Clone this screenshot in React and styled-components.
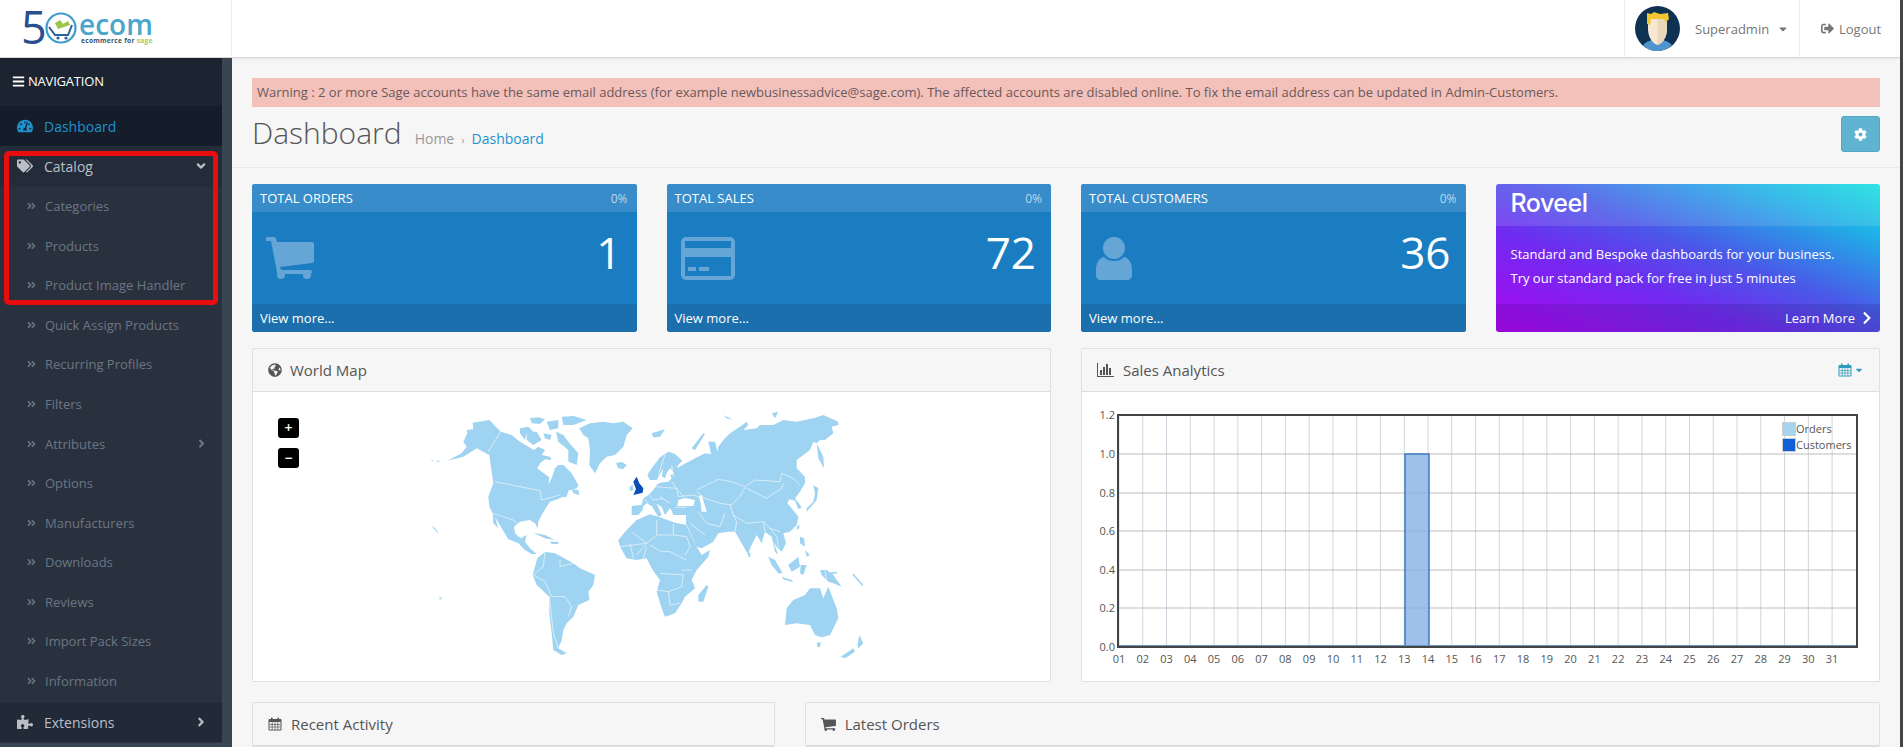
import React from "react";
import styled, { createGlobalStyle } from "styled-components";
import {
  FaAngleDoubleRight,
  FaAngleDown,
  FaAngleRight,
  FaBars,
  FaCaretDown,
  FaChevronRight,
  FaCog,
  FaGlobeAmericas,
  FaPuzzlePiece,
  FaSignOutAlt,
  FaTachometerAlt,
  FaTags,
} from "react-icons/fa";

const GlobalStyle = createGlobalStyle`
  html, body {
    margin: 0;
    height: 747px;
    overflow: hidden;
    background: #f6f6f6;
    font-family: "Open Sans", "Liberation Sans", sans-serif;
  }
  * { box-sizing: border-box; }
`;

const Page = styled.div`
  width: 1903px;
  height: 747px;
  overflow: hidden;
  border-right: 3px solid #454545;
  display: flex;
  flex-direction: column;
`;

/* header */
const Header = styled.header`
  flex: none;
  height: 58px;
  background: #fff;
  border-bottom: 1px solid #d8d8d8;
  box-shadow: 0 1px 2px rgba(0, 0, 0, 0.08);
  display: flex;
  position: relative;
  z-index: 2;
`;

const LogoCell = styled.div`
  width: 232px;
  border-right: 1px solid #eee;
  padding: 11px 0 0 20px;
`;

const LogoSvg = styled.svg`
  display: block;
  overflow: visible;
  font-family: "Open Sans", "Liberation Sans", sans-serif;
`;

const HeaderSpacer = styled.div`
  flex: 1;
`;

const UserCell = styled.div`
  width: 175px;
  border-left: 1px solid #eee;
  display: flex;
  align-items: center;
  padding-left: 10px;
  font-size: 13px;
  color: #777;
`;

const UserName = styled.span`
  margin-left: 15px;
`;

const CaretIcon = styled(FaCaretDown)`
  margin-left: 8px;
  font-size: 12px;
  color: #777;
`;

const LogoutCell = styled.div`
  width: 101px;
  border-left: 1px solid #eee;
  display: flex;
  align-items: center;
  gap: 5px;
  padding-left: 21px;
  font-size: 13px;
  color: #777;
`;

/* sidebar */
const Body = styled.div`
  flex: 1;
  display: flex;
  min-height: 0;
`;

const Aside = styled.aside`
  flex: none;
  width: 232px;
  background: #3a4552;
  overflow: hidden;
`;

const Nav = styled.nav`
  width: 222px;
  background: #29313f;
  position: relative;
`;

const NavTitle = styled.div`
  height: 48px;
  background: #1c2331;
  color: #fff;
  font-size: 13px;
  letter-spacing: -0.2px;
  display: flex;
  align-items: center;
  gap: 3px;
  padding: 0 0 2px 12px;
  svg { font-size: 13px; }
`;

const TopItem = styled.div`
  height: ${({ $h }) => $h || 40}px;
  margin-top: ${({ $gapTop }) => $gapTop || 0}px;
  background: ${({ $bg }) => $bg};
  color: ${({ $color }) => $color};
  font-size: 14px;
  display: flex;
  align-items: center;
  padding: 0 14px 0 17px;
  border-bottom: ${({ $line }) => ($line ? "1px solid #2e3644" : "none")};
`;

const TopIcon = styled.span`
  width: 27px;
  font-size: 16px;
  display: flex;
  align-items: center;
`;

const ItemText = styled.span`
  flex: 1;
`;

const SubItem = styled.div`
  height: 39.55px;
  color: #6c7683;
  font-size: 13px;
  display: flex;
  align-items: center;
  padding: 0 14px 0 27px;
`;

const SubIcon = styled(FaAngleDoubleRight)`
  width: 9px;
  height: 12px;
  margin-right: 9px;
  flex: none;
`;

const Highlight = styled.div`
  position: absolute;
  left: 4px;
  top: 93px;
  width: 214px;
  height: 154px;
  border: 5px solid #e80d0f;
  border-radius: 5px;
  pointer-events: none;
`;

/* page head */
const Main = styled.main`
  flex: 1;
  min-width: 0;
`;

const PageHead = styled.div`
  height: 110px;
  padding: 20px 20px 0;
  border-bottom: 1px solid #e9e9e9;
`;

const Alert = styled.div`
  height: 29px;
  background: #f3c0ba;
  color: #6a5a5a;
  font-size: 13px;
  line-height: 29px;
  padding-left: 5px;
`;

const TitleRow = styled.div`
  display: flex;
  align-items: flex-start;
  height: 61px;
`;

const Title = styled.h1`
  margin: 5px 0 0;
  font-size: 30px;
  line-height: 42px;
  font-weight: 300;
  color: #555;
`;

const Crumbs = styled.div`
  margin: 17px 0 0 13px;
  font-size: 14px;
  line-height: 30px;
  color: #999;
  flex: 1;
`;

const CrumbSep = styled.span`
  margin: 0 7px;
  font-size: 11px;
`;

const CrumbLink = styled.span`
  color: #1e91cf;
`;

const SettingsButton = styled.div`
  margin-top: 9px;
  width: 39px;
  height: 36px;
  background: #60b3d1;
  border: 1px solid #52a7c6;
  border-radius: 3px;
  color: #fff;
  font-size: 13px;
  display: flex;
  align-items: center;
  justify-content: center;
`;

const Content = styled.div`
  padding: 16px 20px 0;
`;

const TileGrid = styled.div`
  display: grid;
  grid-template-columns: repeat(4, 1fr);
  gap: 30px;
  margin-bottom: 16px;
`;

const Tile = styled.div`
  height: 148px;
  border-radius: 3px;
  overflow: hidden;
  color: #fff;
  display: flex;
  flex-direction: column;
  background: #1b7dc1;
`;

const TileHead = styled.div`
  height: 28px;
  padding: 0 7px 0 8px;
  background: #378cc9;
  font-size: 13px;
  display: flex;
  align-items: center;
  justify-content: space-between;
`;

const Percent = styled.span`
  color: #bcd8ec;
  font-size: 12px;
  padding-right: 2px;
`;

const TileBody = styled.div`
  flex: 1;
  display: flex;
  align-items: center;
  justify-content: space-between;
  padding: 0 15px 0 ${({ $pad }) => $pad}px;
`;

const TileNumber = styled.div`
  font-size: 44px;
  line-height: 1;
  margin-bottom: 12px;
`;

const TileFoot = styled.div`
  height: 28px;
  padding: 0 8px;
  background: #1c6fad;
  font-size: 13px;
  line-height: 28px;
`;

const RoveelTile = styled.div`
  height: 148px;
  border-radius: 3px;
  overflow: hidden;
  color: #fff;
  display: flex;
  flex-direction: column;
  background: linear-gradient(to top right, #ab07f2 0%, #6f2cf0 35%, #4a58e8 55%, #1fb0e6 82%, #12e0e0 100%);
`;

const RoveelHead = styled.div`
  height: 42px;
  background: rgba(255, 255, 255, 0.12);
  padding: 3px 0 0 15px;
  font-family: Inter, "Liberation Sans", sans-serif;
  font-size: 25px;
  font-weight: 500;
  letter-spacing: -0.5px;
  line-height: 32px;
`;

const RoveelBody = styled.div`
  flex: 1;
  padding: 16px 15px 0;
  font-size: 13px;
  line-height: 24px;
`;

const RoveelFoot = styled.div`
  height: 28px;
  background: rgba(0, 0, 0, 0.1);
  padding-right: 6px;
  font-size: 13px;
  display: flex;
  align-items: center;
  justify-content: flex-end;
  gap: 5px;
  svg { font-size: 14px; }
`;

/* panels */
const PanelGrid = styled.div`
  display: grid;
  grid-template-columns: ${({ $columns }) => $columns};
  gap: 30px;
  margin-bottom: 20px;
`;

const Panel = styled.section`
  background: #fff;
  border: 1px solid #e0e0e0;
  border-radius: 1px;
`;

const PanelHead = styled.div`
  height: 43px;
  background: #f6f6f6;
  border-bottom: 1px solid #ddd;
  color: #555;
  font-size: 15px;
  padding: 0 15px;
  display: flex;
  align-items: center;
  gap: ${({ $gap }) => $gap || 8}px;
`;

const HeadIcon = styled.span`
  display: flex;
  font-size: 14px;
  color: #555;
`;

const HeadRight = styled.span`
  margin-left: auto;
  display: flex;
  align-items: center;
  gap: 2px;
  color: #2f9bbd;
  font-size: 10px;
`;

const MapBody = styled.div`
  height: 289px;
  padding: 8px 0 0 177px;
  position: relative;
`;

const MapSvg = styled.svg`
  display: block;
  width: 450px;
  height: 265px;
`;

const ZoomButton = styled.div`
  position: absolute;
  left: 25px;
  top: ${({ $top }) => $top}px;
  width: 21px;
  height: 20px;
  background: #000;
  border-radius: 3px;
  color: #fff;
  font-size: 14px;
  font-weight: 600;
  line-height: 19px;
  text-align: center;
`;

const ChartSvg = styled.svg`
  display: block;
  width: 797px;
  height: 289px;
  font-family: "Open Sans", "Liberation Sans", sans-serif;
  font-size: 11px;
  fill: #555;
`;

/* drawn icons */
const CalendarGlyph = ({ size = 14, color = "#555", paper = "#f6f6f6" }) => (
  <svg width={size} height={size} viewBox="0 0 14 14" fill="none">
    <rect x="0.5" y="2" width="13" height="11.5" rx="1" fill={color} />
    <rect x="1.5" y="5" width="11" height="7.5" fill={paper} />
    <path d="M1.5 7.5h11M1.5 10h11M4.2 5v7.5M7 5v7.5M9.8 5v7.5" stroke={color} strokeWidth="0.7" />
    <rect x="3" y="0.5" width="1.6" height="3" rx="0.6" fill={color} />
    <rect x="9.4" y="0.5" width="1.6" height="3" rx="0.6" fill={color} />
  </svg>
);

const BarsGlyph = () => (
  <svg width="17" height="14" viewBox="0 0 17 14" fill="#555">
    <path d="M0 0h1v13h16v1H0z" />
    <rect x="3" y="7" width="2" height="5" />
    <rect x="6" y="4" width="2" height="8" />
    <rect x="9" y="1" width="2" height="11" />
    <rect x="12" y="5" width="2" height="7" />
  </svg>
);

const CartGlyph = ({ width = 48, height = 42, color = "#65a6d6" }) => (
  <svg width={width} height={height} viewBox="0 0 48 42" fill={color}>
    <path d="M0 0h8a2 2 0 0 1 2 2l1 3h35a2 2 0 0 1 2 2v17a2 2 0 0 1-2 2L14 30l1 3h29a1.5 1.5 0 0 1 0 4H13a2 2 0 0 1-2-2L5 4H0z" />
    <circle cx="15" cy="38" r="4" />
    <circle cx="41" cy="38" r="4" />
  </svg>
);

const CardGlyph = () => (
  <svg width="54" height="43" viewBox="0 0 54 43" fill="#65a6d6">
    <path
      fillRule="evenodd"
      d="M5 0h44a5 5 0 0 1 5 5v33a5 5 0 0 1-5 5H5a5 5 0 0 1-5-5V5a5 5 0 0 1 5-5zM4 4v7h46V4zM4 20v18a1 1 0 0 0 1 1h44a1 1 0 0 0 1-1V20z"
    />
    <rect x="7" y="30" width="8" height="4" />
    <rect x="18" y="30" width="10" height="4" />
  </svg>
);

const UserGlyph = () => (
  <svg width="36" height="43" viewBox="0 0 36 43" fill="#65a6d6">
    <circle cx="18" cy="11" r="11" />
    <path d="M8 20c3 3 6 4 10 4s7-1 10-4c5 1 8 6 8 13v5c0 3-2 5-5 5H5c-3 0-5-2-5-5v-5c0-7 3-12 8-13z" />
  </svg>
);

const Avatar = () => (
  <svg width="45" height="45" viewBox="0 0 45 45">
    <circle cx="22.5" cy="22.5" r="22.5" fill="#0f3252" />
    <path d="M8 39c4-4 8-5 14-6 7 1 11 2 15 6-4 4-9 6-15 6s-10-2-14-6z" fill="#4f93cf" />
    <path d="M13 12h19v11c0 6-3 14-9.5 16C16 37 13 29 13 23z" fill="#f6e8d3" />
    <path d="M22.5 12H32v11c0 6-3 14-9.5 16z" fill="#e9d6bb" />
    <path d="M12 7l4 1 3-2 6 2 8-1 1 6-3 3-2-3H16l-1 6-3-1z" fill="#f2c531" />
  </svg>
);

const Logo = () => (
  <LogoSvg width="140" height="36" viewBox="0 0 140 36">
    <text x="1" y="33" fontSize="45" fill="#2b4f8e">5</text>
    <circle cx="41" cy="17" r="14.5" fill="none" stroke="#3f9cc8" strokeWidth="2.2" />
    <path d="M29 16l6 8h13l4-10" fill="none" stroke="#2b5f9e" strokeWidth="2" />
    <path d="M35 12l5-3 3 4 5-3 2 4-12 4z" fill="#9cc64a" />
    <circle cx="38" cy="27" r="1.6" fill="#2b5f9e" />
    <circle cx="46" cy="27" r="1.6" fill="#2b5f9e" />
    <text x="59" y="24" fontSize="28" fontWeight="600" fill="#4ba6c9">ecom</text>
    <text x="61" y="31.5" fontSize="6.6" fontWeight="700" fill="#37556b" letterSpacing="0.3">
      ecommerce for <tspan fill="#a9c65a">sage</tspan>
    </text>
  </LogoSvg>
);

/* world map, traced in 3x pixel units */
const LAND = [
  // North and Central America
  "100,125 112,100 110,90 130,88 128,68 178,60 212,95 245,105 270,125 295,140 312,150 325,140 345,150 335,165 360,170 365,180 345,178 330,190 322,205 335,215 358,232 355,255 365,235 375,205 385,195 400,195 425,220 445,255 440,265 415,272 410,290 395,292 385,297 360,305 350,320 335,345 325,365 322,385 315,370 300,360 270,365 252,380 255,400 272,415 290,405 285,425 300,445 320,462 305,462 285,450 265,430 235,418 215,385 195,350 205,385 190,370 188,340 178,320 175,290 190,250 185,215 178,165 140,145 100,170 52,182 95,160 110,140",
  // South America
  "322,475 345,455 375,460 395,470 430,490 450,505 495,525 490,555 475,575 478,600 445,615 430,650 410,670 400,690 395,720 385,745 410,760 395,765 370,750 365,700 358,640 358,590 320,555 308,525 315,500",
  // Greenland and Iceland
  "448,85 480,70 520,65 550,70 580,65 608,85 590,105 580,140 555,165 530,170 510,190 495,220 478,195 480,150 475,115 460,105",
  "558,190 575,185 590,195 580,207 565,205",
  // Canadian arctic
  "270,85 295,80 310,95 290,100 285,120 270,100",
  "290,95 320,95 335,120 310,135 290,120",
  "300,55 325,52 345,58 330,72 305,70",
  "350,65 385,60 385,85 360,90",
  "395,50 430,48 470,60 430,75 400,75",
  "378,95 400,105 415,125 445,160 440,195 415,185 415,150 385,125",
  "340,100 365,105 360,120 345,115",
  "425,268 445,270 448,285 430,280",
  // Caribbean
  "310,398 345,405 375,420 345,415",
  "360,425 385,425 385,432 365,432",
  // Ireland
  "598,262 608,255 610,270 600,274",
  // Eurasia
  "605,318 635,315 640,295 655,285 670,270 680,255 690,248 715,245 725,235 720,225 732,222 722,205 712,215 705,235 695,228 700,205 680,240 660,240 652,225 665,205 690,172 715,155 735,162 757,182 745,195 740,205 795,175 825,160 860,165 865,140 880,120 900,100 930,80 950,65 955,75 940,90 980,85 990,75 1030,75 1060,60 1100,65 1150,55 1180,45 1225,65 1225,75 1205,80 1210,100 1185,120 1170,120 1160,130 1150,125 1140,150 1100,180 1100,205 1125,230 1125,250 1110,275 1095,295 1115,322 1105,328 1095,302 1078,298 1072,310 1085,325 1105,350 1100,375 1080,395 1060,400 1068,430 1055,455 1040,440 1030,425 1045,465 1035,455 1025,410 1005,395 995,430 980,405 960,445 955,465 935,430 915,395 895,395 865,400 850,425 815,445 800,440 775,385 768,372 768,345 730,345 725,332 720,325 705,345 695,320 690,318 680,310 695,345 685,350 665,318 650,310 640,318 638,330 625,345 605,345",
  // Africa
  "570,440 565,420 590,390 620,360 660,343 690,352 735,368 768,374 800,440 815,465 840,450 835,470 800,510 785,540 795,565 765,590 755,610 735,640 705,650 695,625 680,575 690,540 675,520 665,505 650,475 620,480 590,475",
  "830,555 835,560 820,605 805,605 805,585",
  // Oceania and Asian islands
  "1070,625 1090,600 1125,585 1140,565 1170,565 1180,595 1195,560 1220,625 1225,655 1200,705 1175,712 1155,705 1140,675 1100,670 1065,675",
  "1160,728 1172,726 1170,742 1162,740",
  "1232,770 1270,745 1275,755 1245,775",
  "1282,735 1288,705 1300,730 1285,745",
  "1015,470 1035,480 1058,520 1045,520 1025,495",
  "1075,495 1105,470 1110,500 1085,515",
  "1055,530 1085,540 1090,547 1060,538",
  "1112,495 1130,495 1120,525 1110,520",
  "1170,510 1190,510 1210,525 1235,560 1210,550 1195,545 1175,525",
  "1110,410 1122,415 1125,440 1110,430",
  "1125,450 1140,465 1130,470",
  "1150,255 1165,265 1160,300 1130,335 1130,325 1150,305 1155,280",
  "1160,130 1180,170 1182,205 1165,175",
  "955,458 962,460 960,472 954,470",
  "785,145 820,100 825,102 795,150",
  "835,125 855,125 865,165 845,170",
  "665,100 705,88 690,110 670,112",
  "1025,40 1045,35 1035,55",
  "880,45 910,60 890,55",
  "1103,375 1109,378 1105,390 1100,385",
  // small specks
  "5,376 15,384 25,398 22,398 12,386",
  "4,181 10,181 10,184 4,184",
  "20,182 28,182 28,185 20,185",
  "28,592 34,592 34,598 28,598",
  "1180,520 1220,515 1222,520 1185,525",
  "1270,520 1300,555 1297,558 1268,525",
];

const WATER = [
  "745,300 765,294 795,300 790,318 760,318 742,318",
  "806,288 815,285 830,335 815,335 812,310",
];

const UK = "610,245 620,230 628,250 640,265 638,278 610,285 618,268";

const BORDERS = [
  "212,95 175,155",
  "195,245 330,272 335,300 390,285",
  "190,340 250,360 272,385",
  "345,455 340,500 310,525 345,545 365,590 405,590 425,620 415,650",
  "358,590 370,700 385,745",
  "390,480 390,500 430,490",
  "800,270 815,262 865,238 905,245 945,260 975,240 1050,245 1055,220 1090,235 1110,255",
  "950,265 1010,295 1055,265 1060,250",
  "800,275 825,295 870,310 905,315 930,290 945,262",
  "900,315 910,345 950,370 1000,365 1020,385 1050,395",
  "910,345 920,365 915,395",
  "805,335 830,370 870,380 885,340",
  "780,370 825,405",
  "1000,365 1005,395",
  "1020,385 1040,410 1045,440",
  "705,165 685,225",
  "725,195 730,230",
  "725,245 740,265 745,290",
  "675,260 740,265 760,290",
  "690,290 720,310",
  "660,285 670,300 700,295",
  "640,295 655,310",
  "735,322 770,322",
  "745,290 790,285 805,290",
  "730,372 730,405 770,410 780,440 765,465",
  "605,395 650,430 620,465",
  "570,440 650,430 680,405 730,405",
  "660,435 695,455 720,455 770,480",
  "755,510 785,510",
  "690,520 760,525 755,560 715,575 680,570",
  "715,575 720,615 750,610",
  "680,405 680,360",
  "640,475 650,440",
  "600,430 610,475",
  "1185,512 1190,545",
];

const WorldMap = () => (
  <MapSvg viewBox="0 0 1350 795">
    {LAND.map((points) => (
      <polygon key={points} points={points} fill="#9ed3f1" />
    ))}
    {WATER.map((points) => (
      <polygon key={points} points={points} fill="#fff" />
    ))}
    {BORDERS.map((points) => (
      <polyline key={points} points={points} fill="none" stroke="#fff" strokeWidth="1.8" />
    ))}
    <polygon points={UK} fill="#0b4eb5" />
  </MapSvg>
);

const CHART_Y = [
  ["1.2", 414],
  ["1.0", 453],
  ["0.8", 492],
  ["0.6", 530],
  ["0.4", 569],
  ["0.2", 607],
  ["0.0", 646],
];
const CHART_X = Array.from({ length: 31 }, (_, i) => ({
  label: String(i + 1).padStart(2, "0"),
  x: 1119 + i * 23.77,
}));

const SalesChart = () => (
  <ChartSvg viewBox="1082 391 797 289">
    {CHART_X.map(({ label, x }) => (
      <g key={label}>
        <line x1={x} x2={x} y1="414" y2="646" stroke="#cdd6de" strokeWidth="1" />
        <text x={x} y="662" textAnchor="middle">{label}</text>
      </g>
    ))}
    {CHART_Y.map(([label, y]) => (
      <g key={label}>
        <line x1="1118" x2="1857" y1={y} y2={y} stroke="#bcbcbc" strokeWidth="1" />
        <text x="1115" y={y + 4} textAnchor="end">{label}</text>
      </g>
    ))}
    <rect x="1405" y="453" width="24" height="193" fill="#85b2e6" fillOpacity="0.8" stroke="#3f7cba" strokeWidth="1.5" />
    <line x1="1118" x2="1857" y1="645" y2="645" stroke="#6a94bf" strokeWidth="2" />
    <rect x="1118" y="414" width="739" height="232" fill="none" stroke="#444" strokeWidth="2" />
    <rect x="1782.5" y="421.5" width="13" height="13" fill="#a6d3ee" stroke="#ccc" />
    <rect x="1782.5" y="437.5" width="13" height="13" fill="#0f5fd6" stroke="#ccc" />
    <text x="1796" y="432">Orders</text>
    <text x="1796" y="448">Customers</text>
  </ChartSvg>
);

const SUB_ITEMS = [
  "Categories",
  "Products",
  "Product Image Handler",
  "Quick Assign Products",
  "Recurring Profiles",
  "Filters",
  "Attributes",
  "Options",
  "Manufacturers",
  "Downloads",
  "Reviews",
  "Import Pack Sizes",
  "Information",
];

const TILES = [
  { title: "TOTAL ORDERS", value: "1", pad: 14, icon: <CartGlyph /> },
  { title: "TOTAL SALES", value: "72", pad: 14, icon: <CardGlyph /> },
  { title: "TOTAL CUSTOMERS", value: "36", pad: 15, icon: <UserGlyph /> },
];

const App = () => (
  <Page>
    <GlobalStyle />
    <Header>
      <LogoCell>
        <Logo />
      </LogoCell>
      <HeaderSpacer />
      <UserCell>
        <Avatar />
        <UserName>Superadmin</UserName>
        <CaretIcon />
      </UserCell>
      <LogoutCell>
        <FaSignOutAlt />
        Logout
      </LogoutCell>
    </Header>
    <Body>
      <Aside>
        <Nav>
          <NavTitle>
            <FaBars />
            NAVIGATION
          </NavTitle>
          <TopItem $bg="#161d2a" $color="#1e91cf">
            <TopIcon><FaTachometerAlt /></TopIcon>
            <ItemText>Dashboard</ItemText>
          </TopItem>
          <TopItem $bg="#242c3a" $color="#b9bfc7" $h={40.5}>
            <TopIcon><FaTags /></TopIcon>
            <ItemText>Catalog</ItemText>
            <FaAngleDown />
          </TopItem>
          {SUB_ITEMS.map((item) => (
            <SubItem key={item}>
              <SubIcon />
              <ItemText>{item}</ItemText>
              {item === "Attributes" && <FaAngleRight />}
            </SubItem>
          ))}
          <TopItem $bg="#222a38" $color="#b9bfc7" $gapTop={2} $line>
            <TopIcon><FaPuzzlePiece /></TopIcon>
            <ItemText>Extensions</ItemText>
            <FaAngleRight />
          </TopItem>
          <Highlight />
        </Nav>
      </Aside>
      <Main>
        <PageHead>
          <Alert>
            Warning : 2 or more Sage accounts have the same email address (for example newbusinessadvice@sage.com). The affected accounts are disabled online. To fix the email address can be updated in Admin-Customers.
          </Alert>
          <TitleRow>
            <Title>Dashboard</Title>
            <Crumbs>
              Home
              <CrumbSep>›</CrumbSep>
              <CrumbLink>Dashboard</CrumbLink>
            </Crumbs>
            <SettingsButton>
              <FaCog />
            </SettingsButton>
          </TitleRow>
        </PageHead>
        <Content>
          <TileGrid>
            {TILES.map((tile) => (
              <Tile key={tile.title}>
                <TileHead>
                  {tile.title}
                  <Percent>0%</Percent>
                </TileHead>
                <TileBody $pad={tile.pad}>
                  {tile.icon}
                  <TileNumber>{tile.value}</TileNumber>
                </TileBody>
                <TileFoot>View more...</TileFoot>
              </Tile>
            ))}
            <RoveelTile>
              <RoveelHead>Roveel</RoveelHead>
              <RoveelBody>
                Standard and Bespoke dashboards for your business.
                <br />
                Try our standard pack for free in just 5 minutes
              </RoveelBody>
              <RoveelFoot>
                Learn More
                <FaChevronRight />
              </RoveelFoot>
            </RoveelTile>
          </TileGrid>
          <PanelGrid $columns="1fr 1fr">
            <Panel>
              <PanelHead>
                <HeadIcon><FaGlobeAmericas /></HeadIcon>
                World Map
              </PanelHead>
              <MapBody>
                <ZoomButton $top={26}>+</ZoomButton>
                <ZoomButton $top={56}>−</ZoomButton>
                <WorldMap />
              </MapBody>
            </Panel>
            <Panel>
              <PanelHead $gap={9}>
                <HeadIcon><BarsGlyph /></HeadIcon>
                Sales Analytics
                <HeadRight>
                  <CalendarGlyph size={14} color="#2f9bbd" />
                  <FaCaretDown />
                </HeadRight>
              </PanelHead>
              <SalesChart />
            </Panel>
          </PanelGrid>
          <PanelGrid $columns="calc((100% + 30px) / 3 - 30px) 1fr">
            <Panel>
              <PanelHead $gap={9}>
                <HeadIcon><CalendarGlyph /></HeadIcon>
                Recent Activity
              </PanelHead>
            </Panel>
            <Panel>
              <PanelHead $gap={9}>
                <HeadIcon><CartGlyph width={15} height={13} color="#555" /></HeadIcon>
                Latest Orders
              </PanelHead>
            </Panel>
          </PanelGrid>
        </Content>
      </Main>
    </Body>
  </Page>
);

export default App;
